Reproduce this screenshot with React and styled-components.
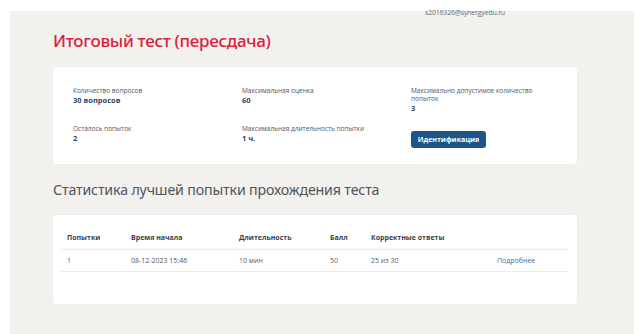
import React from 'react';
import styled, { createGlobalStyle } from 'styled-components';

const Global = createGlobalStyle`
  body {
    margin: 0;
    background: #ffffff;
    font-family: "Open Sans", "Noto Sans", sans-serif;
  }
`;

const Page = styled.div`
  margin: 11px 7px 0 10px;
  background: #f2f1ee;
  height: 323px;
  overflow: visible;
`;

const TopBar = styled.div`
  display: flex;
  height: 0;
  padding-left: 415px;
`;

const Email = styled.span`
  margin-top: -3px;
  font-size: 7px;
  line-height: 9px;
  color: #6b6f78;
  letter-spacing: -0.2px;
`;

const Content = styled.div`
  padding: 19px 0 0 43px;
  width: 524px;
`;

const Title = styled.h1`
  margin: 0 0 15px;
  font-family: "Noto Sans", sans-serif;
  font-weight: 500;
  font-size: 17px;
  line-height: 22px;
  color: #d9233e;
  letter-spacing: -0.3px;
`;

const Card = styled.div`
  background: #fff;
  border-radius: 3px;
  box-shadow: 0 0 2px rgba(0, 0, 0, 0.04);
  padding: ${p => p.$pad};
`;

const InfoGrid = styled.div`
  display: grid;
  grid-template-columns: 169px 169px 140px;
  row-gap: 12px;
`;

const Label = styled.div`
  font-size: 6.5px;
  line-height: 8px;
  color: #50555c;
`;

const Value = styled.div`
  font-size: 7.5px;
  line-height: 10px;
  font-weight: 700;
  color: #2d4763;
`;

const Button = styled.button`
  margin-top: 1px;
  width: 75px;
  height: 17px;
  padding: 0;
  border: none;
  border-radius: 3px;
  background: #1d5588;
  color: #fff;
  font-family: "Open Sans", sans-serif;
  font-size: 7px;
  font-weight: 700;
`;

const Subtitle = styled.h2`
  margin: 16px 0 15px;
  font-family: "Noto Sans", sans-serif;
  font-weight: 400;
  font-size: 14.2px;
  line-height: 20px;
  color: #505359;
  letter-spacing: -0.15px;
`;

const Table = styled.table`
  width: 507px;
  border-collapse: collapse;
  font-size: 7px;
  color: #5a5c60;
`;

const Th = styled.th`
  text-align: left;
  font-weight: 700;
  color: #3b3f46;
  padding: 0 6px 7px;
  line-height: 9px;
  border-bottom: 1px solid #ececec;
  width: ${p => p.$w || 'auto'};
`;

const Td = styled.td`
  padding: 6px 6px 6px;
  line-height: 9px;
  border-bottom: 1px solid #ececec;
`;

const Link = styled.a`
  color: #3a6fa3;
  text-decoration: none;
`;

export default function App() {
  return (
    <>
      <Global />
      <Page>
        <TopBar>
          <Email>s2016326@synergyedu.ru</Email>
        </TopBar>
        <Content>
          <Title>Итоговый тест (пересдача)</Title>
          <Card $pad="20px 20px 16px">
            <InfoGrid>
              <div>
                <Label>Количество вопросов</Label>
                <Value>30 вопросов</Value>
              </div>
              <div>
                <Label>Максимальная оценка</Label>
                <Value>60</Value>
              </div>
              <div>
                <Label>Максимально допустимое количество попыток</Label>
                <Value>3</Value>
              </div>
              <div>
                <Label>Осталось попыток</Label>
                <Value>2</Value>
              </div>
              <div>
                <Label>Максимальная длительность попытки</Label>
                <Value>1 ч.</Value>
              </div>
              <div>
                <Button>Идентификация</Button>
              </div>
            </InfoGrid>
          </Card>
          <Subtitle>Статистика лучшей попытки прохождения теста</Subtitle>
          <Card $pad="18px 8px 32px">
            <Table>
              <thead>
                <tr>
                  <Th $w="52px">Попытки</Th>
                  <Th $w="96px">Время начала</Th>
                  <Th $w="79px">Длительность</Th>
                  <Th $w="29px">Балл</Th>
                  <Th $w="114px">Корректные ответы</Th>
                  <Th />
                </tr>
              </thead>
              <tbody>
                <tr>
                  <Td>1</Td>
                  <Td>08-12-2023 15:46</Td>
                  <Td>10 мин</Td>
                  <Td>50</Td>
                  <Td>25 из 30</Td>
                  <Td><Link href="#">Подробнее</Link></Td>
                </tr>
              </tbody>
            </Table>
          </Card>
        </Content>
      </Page>
    </>
  );
}
